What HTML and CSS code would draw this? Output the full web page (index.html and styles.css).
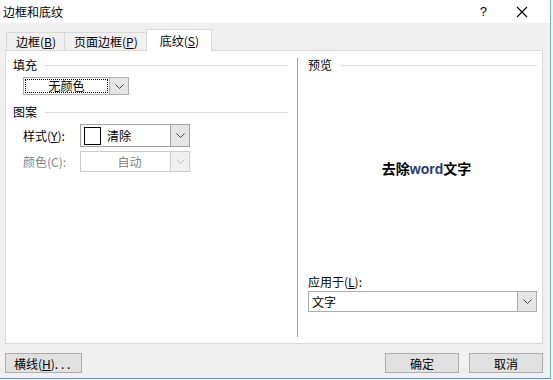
FILE: index.html
```html
<!DOCTYPE html>
<html lang="zh-CN">
<head>
<meta charset="UTF-8" />
<meta name="viewport" content="width=device-width, initial-scale=1.0"/>
<title>边框和底纹</title>
<link rel="stylesheet" href="styles.css">
</head>
<body>

<div class="window">
  <div class="titlebar">
    <span class="title">边框和底纹</span>
    <span class="help">?</span>
    <svg class="close" width="12" height="12" viewBox="0 0 12 12"><path d="M1 1L11 11M11 1L1 11" stroke="#000" stroke-width="1.1" fill="none"/></svg>
  </div>

  <div class="dialog">
    <div class="tabs">
      <div class="tab">边框(<u>B</u>)</div>
      <div class="tab">页面边框(<u>P</u>)</div>
      <div class="tab active">底纹(<u>S</u>)</div>
    </div>

    <div class="panel">
      <div class="col-left">
        <div class="group-head">填充</div>
        <div class="combo fill">
          <div class="combo-text"><span class="focus">无颜色</span></div>
          <div class="combo-btn">
            <svg width="9" height="5" viewBox="0 0 9 5"><polyline points="0.5,0.5 4.5,4.5 8.5,0.5" fill="none" stroke="#444" stroke-width="1"/></svg>
          </div>
        </div>

        <div class="group-head pattern">图案</div>
        <div class="row">
          <span class="row-label">样式(<u>Y</u>):</span>
          <div class="combo style">
            <div class="combo-text"><span class="swatch"></span>清除</div>
            <div class="combo-btn">
              <svg width="9" height="5" viewBox="0 0 9 5"><polyline points="0.5,0.5 4.5,4.5 8.5,0.5" fill="none" stroke="#444" stroke-width="1"/></svg>
            </div>
          </div>
        </div>
        <div class="row disabled">
          <span class="row-label">颜色(C):</span>
          <div class="combo color">
            <div class="combo-text">自动</div>
            <div class="combo-btn">
              <svg width="9" height="5" viewBox="0 0 9 5"><polyline points="0.5,0.5 4.5,4.5 8.5,0.5" fill="none" stroke="#bbb" stroke-width="1"/></svg>
            </div>
          </div>
        </div>
      </div>

      <div class="divider"></div>

      <div class="col-right">
        <div class="group-head">预览</div>
        <div class="preview">
          <span class="sample">去除<span class="word">word</span>文字</span>
        </div>
        <div class="apply-label">应用于(<u>L</u>):</div>
        <div class="combo apply">
          <div class="combo-text">文字</div>
          <div class="combo-btn">
            <svg width="9" height="5" viewBox="0 0 9 5"><polyline points="0.5,0.5 4.5,4.5 8.5,0.5" fill="none" stroke="#444" stroke-width="1"/></svg>
          </div>
        </div>
      </div>
    </div>

    <div class="footer">
      <button class="btn hline">横线(<u>H</u>). . .</button>
      <span class="spacer"></span>
      <button class="btn">确定</button>
      <button class="btn">取消</button>
    </div>
  </div>
</div>

</body>
</html>
```

FILE: styles.css
```css
html, body {
  margin: 0;
  padding: 0;
  background: #fbfbfb;
}

body {
  font-family: "Noto Sans CJK SC", "Liberation Sans", sans-serif;
  font-size: 12px;
  color: #000;
}

u {
  text-decoration: underline;
  text-underline-offset: 1px;
}

/* окно диалога */
.window {
  width: 550px;
  height: 378px;
  background: #f0f0f0;
  border-right: 1px solid #6ab2d8;
  border-bottom: 1px solid #4d9ad0;
  display: flex;
  flex-direction: column;
}

/* заголовок */
.titlebar {
  height: 23px;
  background: #fff;
  display: flex;
  align-items: center;
  padding-left: 3px;
  box-sizing: border-box;
}

.title {
  flex: 1;
  line-height: 14px;
}

.help {
  font-family: "Liberation Sans", sans-serif;
  font-size: 13px;
  margin-right: 29px;
}

.close {
  margin-right: 22px;
}

.dialog {
  padding: 6px 7px 0 5px;
  display: flex;
  flex-direction: column;
}

/* вкладки */
.tabs {
  display: flex;
  align-items: flex-end;
  height: 21px;
  padding-left: 1px;
  position: relative;
  z-index: 1;
}

.tab {
  height: 18px;
  line-height: 18px;
  padding: 0 8px 0 9px;
  border: 1px solid #d9d9d9;
  border-bottom: none;
  border-right: none;
  background: #f0f0f0;
  box-sizing: border-box;
}

.tab.active {
  height: 22px;
  line-height: 22px;
  background: #fff;
  border-right: 1px solid #d9d9d9;
  padding: 0 12px 0 13px;
  margin-bottom: -1px;
}

/* панель */
.panel {
  height: 294px;
  background: #fff;
  border: 1px solid #d9d9d9;
  box-sizing: border-box;
  display: flex;
}

.col-left {
  width: 291px;
  padding: 7px 9px 0 7px;
  box-sizing: border-box;
}

.divider {
  width: 1px;
  background: #a0a0a0;
  margin: 7px 0 6px;
}

.col-right {
  flex: 1;
  padding: 7px 5px 0 10px;
  display: flex;
  flex-direction: column;
}

.group-head {
  display: flex;
  align-items: center;
  line-height: 14px;
  height: 14px;
}

.group-head::after {
  content: "";
  flex: 1;
  height: 1px;
  background: #dcdcdc;
  margin-left: 8px;
}

.group-head.pattern {
  margin-top: 10px;
}

/* выпадающие списки */
.combo {
  display: flex;
  border: 1px solid #acacac;
  box-sizing: border-box;
  background: #fff;
}

.combo-text {
  flex: 1;
  display: flex;
  align-items: center;
}

.combo-btn {
  width: 18px;
  background: #e5e5e5;
  border-left: 1px solid #acacac;
  display: flex;
  align-items: center;
  justify-content: center;
}

.combo.fill {
  width: 106px;
  height: 18px;
  margin: 5px 0 0 10px;
}

.combo.fill .combo-text {
  padding: 1px;
}

.focus {
  flex: 1;
  align-self: stretch;
  border: 1px dotted #000;
  text-align: center;
  line-height: 12px;
}

.row {
  display: flex;
  align-items: center;
  margin-top: 5px;
  padding-left: 10px;
}

.row + .row {
  margin-top: 4px;
}

.row-label {
  width: 57px;
}

.combo.style {
  width: 110px;
  height: 23px;
  border-color: #a0a0a0;
}

.combo.style .combo-btn {
  border-left-color: #a0a0a0;
}

.swatch {
  width: 15px;
  height: 16px;
  border: 1px solid #000;
  margin: 0 6px 0 3px;
}

.disabled {
  color: #838383;
}

.combo.color {
  width: 110px;
  height: 21px;
  border-color: #cccccc;
}

.combo.color .combo-text {
  justify-content: center;
  padding-left: 8px;
}

.combo.color .combo-btn {
  background: #f0f0f0;
  border-left-color: #cccccc;
}

/* предпросмотр */
.preview {
  height: 203px;
  display: flex;
  justify-content: center;
  align-items: center;
  padding: 0 0 11px 8px;
  box-sizing: border-box;
}

.sample {
  font-size: 14px;
  font-weight: bold;
}

.word {
  color: #1f3a7a;
  font-family: "Liberation Sans", sans-serif;
}

.apply-label {
  line-height: 14px;
}

.combo.apply {
  height: 21px;
  margin-top: 2px;
  border-color: #acacac;
}

.combo.apply .combo-text {
  padding-left: 3px;
}

/* кнопки */
.footer {
  display: flex;
  margin-top: 9px;
}

.spacer {
  flex: 1;
}

.btn {
  height: 20px;
  width: 74px;
  margin: 0 0 0 10px;
  padding: 0;
  background: #e1e1e1;
  border: 1px solid #adadad;
  font-family: inherit;
  font-size: 12px;
  color: #000;
}

.btn.hline {
  width: 77px;
  margin: 0;
  text-align: left;
  padding-left: 8px;
}
```
